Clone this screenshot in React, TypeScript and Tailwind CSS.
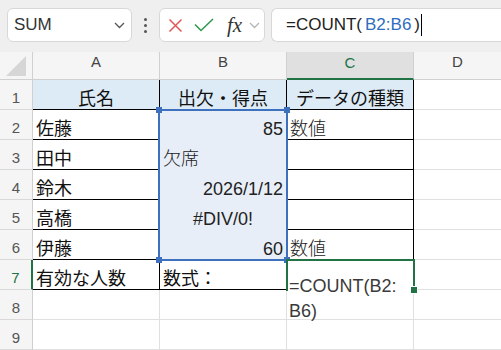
import React from "react";

const FONT = "font-['Liberation_Sans','Noto_Sans_CJK_JP',sans-serif]";

const GRID = "border-r border-b border-[#e0e0e0]";
const BLACK = "border-r border-b border-black";
const HEAD = "bg-[#ddebf7]";
const SEL = "bg-[#e8eef8] border-r border-b border-[#e8eef8]";

function Cell({ className = "", children }: { className?: string; children?: React.ReactNode }) {
  return (
    <div className={`h-[30px] box-border flex items-end whitespace-nowrap px-[3px] leading-[19px] ${className}`}>
      {children}
    </div>
  );
}

function RowHead({ n, active }: { n: number; active?: boolean }) {
  return (
    <div
      className={`h-[30px] box-border flex items-end justify-center pb-[1px] text-[15px] leading-[21px] bg-[#f5f5f5] border-b border-[#d9d9d9] ${
        active ? "border-r-2 border-r-[#217346] text-[#217346]" : "border-r border-r-[#d0d0d0] text-[#555]"
      }`}
    >
      {n}
    </div>
  );
}

function Chevron({ color }: { color: string }) {
  return (
    <svg width="11" height="7" viewBox="0 0 11 7" fill="none">
      <path d="M1 1l4.5 4.5L10 1" stroke={color} strokeWidth="1.3" />
    </svg>
  );
}

export default function App() {
  const ja = "text-[18px] text-[#111] font-normal";
  const jaLight = "text-[18px] text-[#222] font-light";
  const num = "text-[18px] text-[#222]";

  return (
    <div className={`w-[501px] h-[350px] overflow-hidden bg-white ${FONT}`}>
      {/* formula bar */}
      <div className="h-[52px] bg-[#efefef] flex items-start pt-[8px] pl-[7px]">
        <div className="w-[125px] h-[34px] box-border bg-white border border-[#d8d8d8] rounded-md flex items-center justify-between pl-[6px] pr-[6px]">
          <span className="text-[17px] text-[#333]">SUM</span>
          <Chevron color="#555" />
        </div>
        <div className="w-[27px] h-[34px] flex flex-col items-center justify-center gap-[3px]">
          <span className="w-[3px] h-[3px] bg-[#555] rounded-full" />
          <span className="w-[3px] h-[3px] bg-[#555] rounded-full" />
          <span className="w-[3px] h-[3px] bg-[#555] rounded-full" />
        </div>
        <div className="w-[106px] h-[34px] box-border bg-white border border-[#d8d8d8] rounded-md flex items-center pl-[8px]">
          <svg width="15" height="15" viewBox="0 0 15 15" fill="none">
            <path d="M1.5 1.5l12 12M13.5 1.5l-12 12" stroke="#e25656" strokeWidth="1.5" />
          </svg>
          <svg className="ml-[11px]" width="20" height="14" viewBox="0 0 20 14" fill="none">
            <path d="M1 6.5l6 6L19 1" stroke="#2e9950" strokeWidth="1.6" />
          </svg>
          <span className="ml-[13px] font-['Liberation_Serif',serif] italic text-[21px] leading-none text-[#333]">fx</span>
          <span className="ml-[7px] flex">
            <Chevron color="#b5b5b5" />
          </span>
        </div>
        <div className="ml-[6px] flex-1 h-[34px] box-border bg-white border border-r-0 border-[#d8d8d8] rounded-l-md flex items-center pl-[14px] text-[17px] text-[#222]">
          <span>=COUNT(</span>
          <span className="mx-[3px] text-[#2e6cc0]">B2:B6</span>
          <span>)</span>
          <span className="ml-[1px] w-[1px] h-[22px] bg-black" />
        </div>
      </div>

      {/* sheet */}
      <div className="relative">
        <div className="grid grid-cols-[33px_127px_127px_127px_1fr]">
          {/* column headers */}
          <div className="h-[28px] box-border bg-[#f5f5f5] border-r border-b border-[#d0d0d0] flex items-end justify-center pb-[2px]">
            <svg width="22" height="22" viewBox="0 0 22 22">
              <path d="M21 1V21H1Z" fill="#d6d6d6" />
            </svg>
          </div>
          <div className="h-[28px] box-border bg-[#f5f5f5] border-r border-b border-[#d0d0d0] flex items-center justify-center pb-[6px] text-[15px] text-[#444]">A</div>
          <div className="h-[28px] box-border bg-[#f5f5f5] border-r border-b border-[#d0d0d0] flex items-center justify-center pb-[6px] text-[15px] text-[#444]">B</div>
          <div className="h-[28px] box-border bg-[#e0e0e0] border-r border-r-[#d0d0d0] border-b-2 border-b-[#217346] flex items-center justify-center pb-[4px] text-[15px] text-[#217346]">C</div>
          <div className="h-[28px] box-border bg-[#f5f5f5] border-b border-[#d0d0d0] flex items-center justify-center pb-[6px] text-[15px] text-[#444]">D</div>

          {/* row 1 */}
          <RowHead n={1} />
          <Cell className={`${BLACK} ${HEAD} ${ja} justify-center`}>氏名</Cell>
          <Cell className={`${BLACK} ${HEAD} ${ja} justify-center`}>出欠・得点</Cell>
          <Cell className={`${BLACK} ${HEAD} ${ja} justify-center`}>データの種類</Cell>
          <Cell className="border-b border-[#e0e0e0]" />

          {/* row 2 */}
          <RowHead n={2} />
          <Cell className={`${BLACK} ${ja}`}>佐藤</Cell>
          <Cell className={`${SEL} ${num} justify-end`}>85</Cell>
          <Cell className={`${BLACK} ${jaLight}`}>数値</Cell>
          <Cell className="border-b border-[#e0e0e0]" />

          {/* row 3 */}
          <RowHead n={3} />
          <Cell className={`${BLACK} ${ja}`}>田中</Cell>
          <Cell className={`${SEL} ${jaLight}`}>欠席</Cell>
          <Cell className={BLACK} />
          <Cell className="border-b border-[#e0e0e0]" />

          {/* row 4 */}
          <RowHead n={4} />
          <Cell className={`${BLACK} ${ja}`}>鈴木</Cell>
          <Cell className={`${SEL} ${num} justify-end`}>2026/1/12</Cell>
          <Cell className={BLACK} />
          <Cell className="border-b border-[#e0e0e0]" />

          {/* row 5 */}
          <RowHead n={5} />
          <Cell className={`${BLACK} ${ja}`}>高橋</Cell>
          <Cell className={`${SEL} ${num} justify-center`}>#DIV/0!</Cell>
          <Cell className={BLACK} />
          <Cell className="border-b border-[#e0e0e0]" />

          {/* row 6 */}
          <RowHead n={6} />
          <Cell className={`${BLACK} ${ja}`}>伊藤</Cell>
          <Cell className={`${SEL} ${num} justify-end`}>60</Cell>
          <Cell className={`${BLACK} ${jaLight}`}>数値</Cell>
          <Cell className="border-b border-[#e0e0e0]" />

          {/* row 7 */}
          <RowHead n={7} active />
          <Cell className={`${BLACK} ${ja}`}>有効な人数</Cell>
          <Cell className={`${BLACK} ${ja}`}>数式：</Cell>
          <Cell className="border-r border-[#e0e0e0]" />
          <Cell className="border-b border-[#e0e0e0]" />

          {/* rows 8, 9 */}
          {[8, 9].map((n) => (
            <React.Fragment key={n}>
              <RowHead n={n} />
              <Cell className={GRID} />
              <Cell className={GRID} />
              <Cell className={GRID} />
              <Cell className="border-b border-[#e0e0e0]" />
            </React.Fragment>
          ))}
        </div>

        {/* reference highlight B2:B6 */}
        <div className="absolute left-[158px] top-[57px] w-[130px] h-[152px] border-2 border-[#3d70bd] pointer-events-none" />
        <div className="absolute left-[156px] top-[55px] w-[6px] h-[6px] bg-[#3d70bd]" />
        <div className="absolute left-[284px] top-[55px] w-[6px] h-[6px] bg-[#3d70bd]" />
        <div className="absolute left-[156px] top-[205px] w-[6px] h-[6px] bg-[#3d70bd]" />
        <div className="absolute left-[284px] top-[205px] w-[6px] h-[6px] bg-[#3d70bd]" />

        {/* editing cell C7 */}
        <div className="absolute left-[288px] top-[209px] w-[125px] h-[58px] bg-white pt-[13px] pl-[1px] text-[18px] leading-[25px] text-[#3a3a3a]">
          =COUNT(B2:
          <br />
          B6)
        </div>
        <div className="absolute left-[286px] top-[207px] w-[129px] h-[32px] border-2 border-b-0 border-[#217346]" />
        <div className="absolute left-[411px] top-[235px] w-[6px] h-[6px] bg-[#217346] outline outline-1 outline-white" />
      </div>
    </div>
  );
}
